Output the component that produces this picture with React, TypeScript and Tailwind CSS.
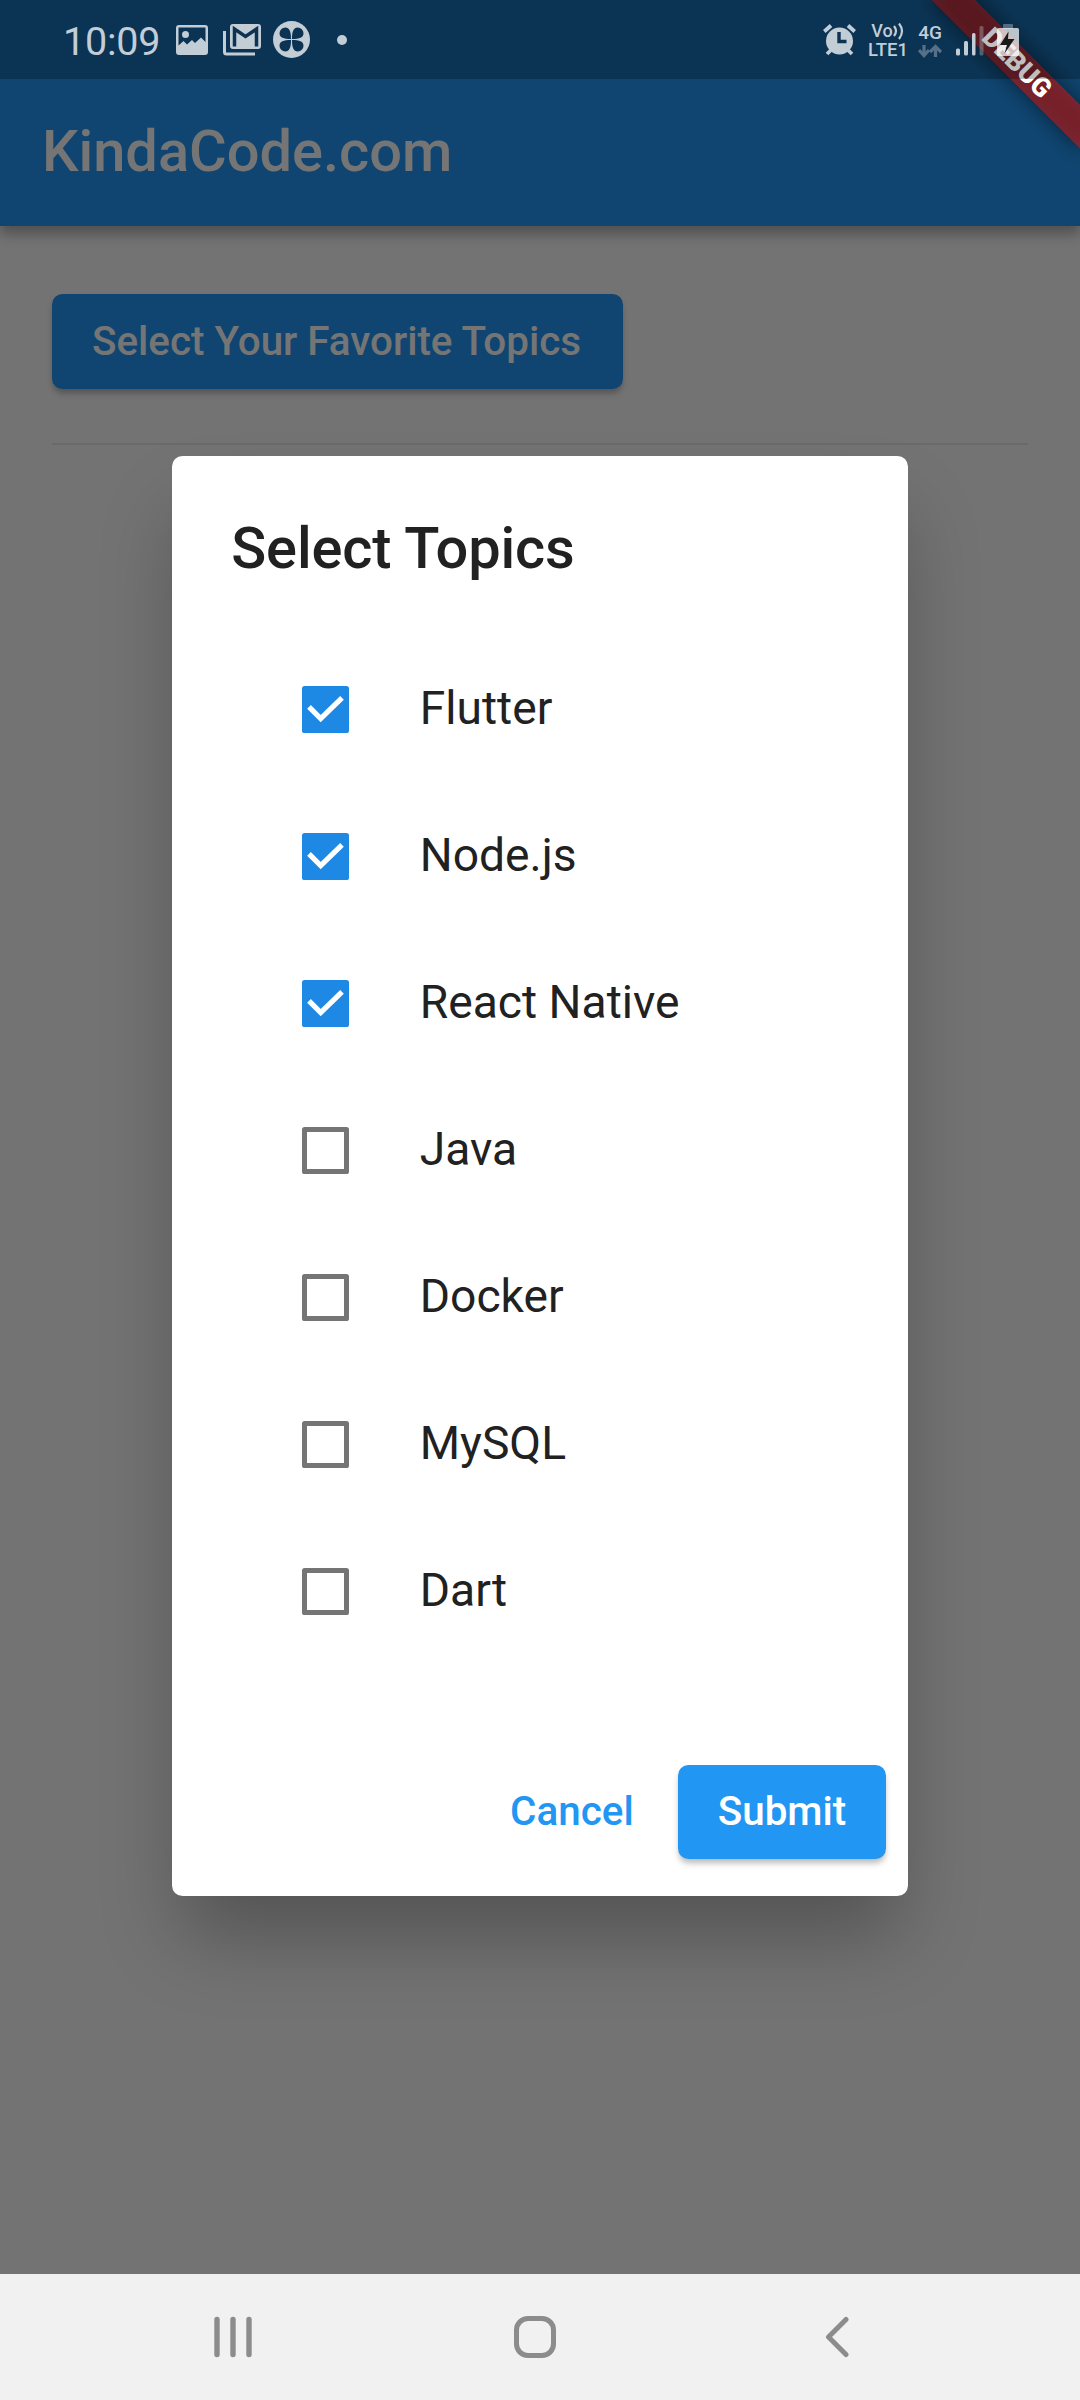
const topics = [
  { name: 'Flutter', checked: true },
  { name: 'Node.js', checked: true },
  { name: 'React Native', checked: true },
  { name: 'Java', checked: false },
  { name: 'Docker', checked: false },
  { name: 'MySQL', checked: false },
  { name: 'Dart', checked: false },
];

function Checkbox({ checked }: { checked: boolean }) {
  if (!checked) {
    return <span className="block size-[47px] rounded-[2.6px] border-[5px] border-[#757575]" />;
  }
  return (
    <span className="block size-[47px] rounded-[2.6px] bg-[#1e88e5]">
      <svg viewBox="0 0 47 47" className="block size-full" fill="none" stroke="#fff" strokeWidth="5.2">
        <path d="M7 20.8 L18.7 32.6 L40 11.8" />
      </svg>
    </span>
  );
}

function ImageIcon() {
  return (
    <svg viewBox="0 0 32 30" className="h-[30px] w-8">
      <path
        fill="#c2cdd6"
        fillRule="evenodd"
        d="M3 0H29Q32 0 32 3V27Q32 30 29 30H3Q0 30 0 27V3Q0 0 3 0ZM2.5 2.5V20.500L7.5 16L11 19.500L16 15L19 18L25 12.500L29.5 17V2.5ZM9.5 6A3.5 3.5 0 1 1 9.5 13A3.5 3.5 0 1 1 9.5 6Z"
      />
    </svg>
  );
}

function MailStackIcon() {
  return (
    <svg viewBox="0 0 38 32" className="h-8 w-[38px]">
      <path d="M1.5 7V28Q1.5 30 3.5 30H32" fill="none" stroke="#c2cdd6" strokeWidth="3" />
      <rect x="7" y="0" width="31" height="25" rx="3" fill="#c2cdd6" />
      <path d="M11.500 22.5V5L22.5 12.500L33.500 5V22.5" fill="none" stroke="#0c3354" strokeWidth="3.5" />
    </svg>
  );
}

function CloverIcon() {
  const petal = 'M18 18C18 10.500 16.500 6.500 12.300 6.500A5.800 5.800 0 0 0 6.500 12.300C6.500 16.500 10.500 18 18 18Z';
  return (
    <svg viewBox="0 0 37 37" className="size-[37px]">
      <circle cx="18.5" cy="18.5" r="18.5" fill="#c2cdd6" />
      <g fill="#0c3354">
        <path d={petal} />
        <path d={petal} transform="rotate(90 18.5 18.5)" />
        <path d={petal} transform="rotate(180 18.5 18.5)" />
        <path d={petal} transform="rotate(270 18.5 18.5)" />
      </g>
    </svg>
  );
}

function AlarmIcon() {
  return (
    <svg viewBox="0 0 33 32" className="h-8 w-[33px]">
      <g stroke="#c2cdd6" strokeWidth="3.8" fill="none">
        <path d="M1.3 7.5L8 1.5M31.7 7.5L25 1.5M4 30L9 25M29 30L24 25" />
      </g>
      <circle cx="16.5" cy="17" r="13.5" fill="#c2cdd6" />
      <path d="M16 8V17.500H23.500" fill="none" stroke="#0c3354" strokeWidth="3.4" />
    </svg>
  );
}

function DebugBanner() {
  return (
    <div className="absolute top-0 right-0 size-[200px] overflow-hidden">
      <div className="absolute top-0 left-[200px] h-0 w-0 rotate-45">
        <div className="absolute top-[73.5px] -left-[105px] h-[31.5px] w-[210px] bg-black/50 blur-[10px]" />
        <div className="absolute top-[73.5px] -left-[105px] flex h-[31.5px] w-[210px] items-center justify-center bg-[#b71c1c]/63 text-[26.8px] leading-none font-black text-white">
          DEBUG
        </div>
      </div>
    </div>
  );
}

function StatusBar() {
  return (
    <div className="absolute inset-x-0 top-0 flex h-[79px] justify-between bg-black/25 text-[#c2cdd6]">
      <div className="flex items-center pl-[63px]">
        <span className="w-[113px] pt-[4px] text-[39.5px] leading-none tracking-[-0.2px]">10:09</span>
        <ImageIcon />
        <span className="w-[15px]" />
        <MailStackIcon />
        <span className="w-[12px]" />
        <CloverIcon />
        <span className="ml-[27px] size-[10px] rounded-full bg-[#c2cdd6]" />
      </div>
      <div className="flex items-start pt-[24px] pr-[61px]">
        <AlarmIcon />
        <div className="ml-[11px] flex w-[42px] flex-col items-center text-[18px] leading-[18px] font-medium">
          <span className="-mt-[2px] flex items-center">
            Vo
            <svg viewBox="0 0 12 18" className="h-[18px] w-[12px]" fill="none" stroke="#c2cdd6" strokeWidth="2.2">
              <path d="M1 4Q5 9 1 14M6 1.500Q12 9 6 17" />
            </svg>
          </span>
          <span className="mt-[1px] text-[18.5px]">LTE1</span>
        </div>
        <div className="ml-[8px] flex w-[26px] flex-col items-center text-[19px] leading-[18px] font-medium">
          <span>4G</span>
          <svg viewBox="0 0 24 14" className="mt-[2px] h-[14px] w-6" fill="none" stroke="#557087" strokeWidth="3.2">
            <path d="M6 1V11M1 6L6 11.500L11 6M17.500 13V3M12 8L17.500 2.500L23 8" />
          </svg>
        </div>
        <svg viewBox="0 0 28 32" className="ml-[13px] h-8 w-7">
          <g fill="#c2cdd6">
            <rect x="0" y="24.500" width="4" height="7" rx="1.500" />
            <rect x="8" y="17" width="4" height="14.500" rx="1.500" />
            <rect x="16" y="9" width="3.500" height="22.500" rx="1.500" />
            <rect x="23.500" y="2" width="4" height="29.500" rx="1.500" opacity=".35" />
          </g>
        </svg>
        <svg viewBox="0 0 22 34" className="ml-[13px] h-[34px] w-[22px]">
          <rect x="6" y="0" width="10" height="5" rx="1" fill="#c2cdd6" opacity=".4" />
          <rect x="0" y="4" width="22" height="28" rx="1.500" fill="#fff" opacity=".72" />
          <path d="M11.500 7.500L3 21H10L7.500 29.500L17.500 15H11Z" fill="#1a1a1a" />
        </svg>
      </div>
    </div>
  );
}

function TopicsDialog() {
  return (
    <div className="absolute inset-x-0 top-0 flex h-[2274px] items-center justify-center bg-black/54 pt-[78.6px]">
      <div className="flex h-[1440px] w-[735.5px] flex-col rounded-[10.5px] bg-white text-[#212121] shadow-[0_50px_80px_-10px_rgba(0,0,0,0.28)]">
        <h2 className="pt-[58px] pl-[59px] text-[57.75px] leading-[68px] font-medium tracking-[-0.12px]">
          Select Topics
        </h2>
        <ul className="mt-[53.7px] flex flex-col">
          {topics.map((t) => (
            <li key={t.name} className="flex h-[147px] items-center pl-[129.500px]">
              <Checkbox checked={t.checked} />
              <span className="ml-[71px] pb-[2.4px] text-[46.2px] leading-[54px]">{t.name}</span>
            </li>
          ))}
        </ul>
        <div className="mt-[100px] flex items-center justify-end pr-[21.5px] text-[40.4px] leading-none font-medium">
          <span className="mr-[44px] text-[#2196f3]">Cancel</span>
          <button className="flex h-[94.5px] w-[208.5px] items-center justify-center rounded-[10.5px] bg-[#2196f3] text-white shadow-[0_5px_6px_-1px_rgba(0,0,0,0.28)]">
            Submit
          </button>
        </div>
      </div>
    </div>
  );
}

function NavBar() {
  return (
    <nav className="relative flex h-[126px] items-center bg-[#f1f1f1] pl-[213px]">
      <svg viewBox="0 0 40 42" className="h-[42px] w-10" stroke="#8c8c8c" strokeWidth="5.400" strokeLinecap="round">
        <path d="M4 3.500V38.500M20 3.500V38.500M36 3.500V38.500" />
      </svg>
      <span className="ml-[261px] size-[42px] rounded-[14px] border-[5px] border-[#8c8c8c]" />
      <svg
        viewBox="0 0 24 42"
        className="ml-[269px] h-[42px] w-6"
        fill="none"
        stroke="#8c8c8c"
        strokeWidth="5"
        strokeLinecap="round"
        strokeLinejoin="round"
      >
        <path d="M21 3.500L3.500 21L21 38.500" />
      </svg>
    </nav>
  );
}

export default function App() {
  return (
    <div className="relative flex h-[2400px] w-[1080px] flex-col overflow-hidden bg-[#fafafa] font-['Roboto',sans-serif]">
      <header className="flex h-[226px] items-center bg-[#2196f3] pt-[77px] pl-[42px] text-[57.75px] font-medium text-white shadow-[0_8px_12px_0_rgba(0,0,0,0.3)]">
        KindaCode.com
      </header>
      <main className="flex flex-1 flex-col items-start px-[52px] pt-[68px]">
        <button className="flex h-[94.5px] w-[571px] items-center justify-center rounded-[10.5px] bg-[#2196f3] pt-[2px] pr-[2px] text-[40.4px] font-medium tracking-[-0.03px] text-white shadow-[0_5px_6px_-1px_rgba(0,0,0,0.28)]">
          Select Your Favorite Topics
        </button>
        <div className="mt-[54px] h-[2px] w-full bg-black/7" />
      </main>
      <TopicsDialog />
      <DebugBanner />
      <StatusBar />
      <NavBar />
    </div>
  );
}
